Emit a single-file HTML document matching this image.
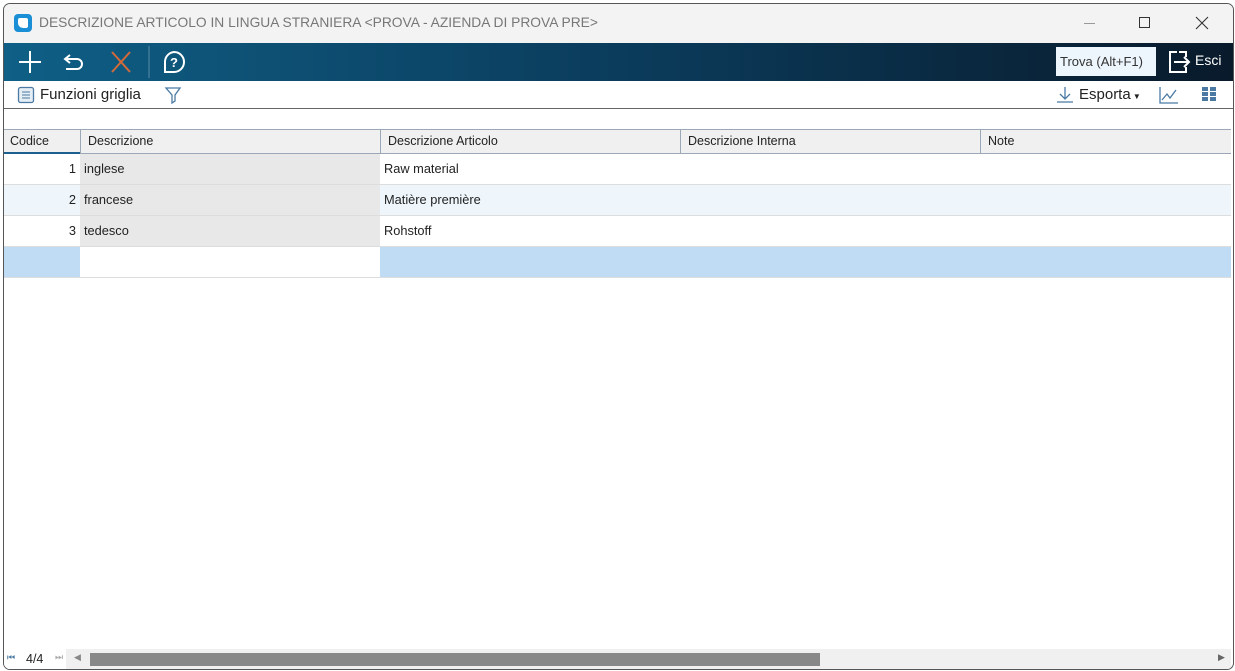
<!DOCTYPE html><html><head><style>
*{margin:0;padding:0;box-sizing:border-box}
body{width:1235px;height:671px;background:#fff;font-family:"Liberation Sans",sans-serif;overflow:hidden;position:relative}
.win{position:absolute;left:3px;top:3px;width:1231px;height:667px;border:1px solid #555;border-radius:7px;overflow:hidden;background:#fff}
.title{position:absolute;left:0;top:0;width:100%;height:39px;background:#f3f3f3;font-size:13.8px;color:#777;line-height:38px;padding-left:35px}
.tb{position:absolute;left:0;top:39px;width:100%;height:38px;background:linear-gradient(90deg,#0f5f86 0%,#0b3c5c 50%,#091a2b 100%)}
.abs{position:absolute}
.row2{position:absolute;top:77px;left:0;width:100%;height:28px;border-bottom:1px solid #666;font-size:15px;color:#222}
.hdr{position:absolute;top:125px;left:0;width:1227px;height:25px;background:#f0f0f0;border-top:1px solid #9aa8b8;border-bottom:1px solid #9aa8b8;font-size:12.5px;color:#222}
.hdr div{position:absolute;top:0;height:24px;line-height:23px;padding-left:7px;border-left:1px solid #9aa8b8}
.r{position:absolute;left:0;width:1227px;height:31px;border-bottom:1px solid #ddd;font-size:12.8px;color:#222;line-height:30px}
.r div{position:absolute;top:0;height:30px}
</style></head><body><div class="win">
<div class="title">DESCRIZIONE ARTICOLO IN LINGUA STRANIERA &lt;PROVA - AZIENDA DI PROVA PRE&gt;</div>
<div class="abs" style="left:10px;top:10px;width:18px;height:18px;background:#1a8fd6;border-radius:4px"><div style="position:absolute;left:4px;top:4px;width:10px;height:10px;background:#fff;border-radius:2px 2px 2px 5px"></div></div>
<div class="abs" style="left:1080px;top:19px;width:11px;height:1px;background:#999"></div>
<div class="abs" style="left:1135px;top:13px;width:11px;height:11px;border:1px solid #333"></div>
<svg class="abs" style="left:1191px;top:12px" width="14" height="14"><path d="M1 1l12 12M13 1L1 13" stroke="#333" stroke-width="1.1"/></svg>
<div class="tb">
<svg class="abs" style="left:0;top:0" width="200" height="38"><g stroke="#fff" stroke-width="2" fill="none"><path d="M26 8v22M15 19h22"/><path d="M66 12l-5 4 5 4M61 16h12a5 5 0 0 1 0 10H62"/><path d="M170 9a10 10 0 1 1 0 20h-9v-10a10 10 0 0 1 9-10z"/></g><path d="M108 9l18 20M126 9l-18 20" stroke="#d06a3a" stroke-width="2"/><line x1="145" y1="3" x2="145" y2="35" stroke="#5a8aa8"/><text x="166" y="24" fill="#fff" font-size="13" font-weight="bold" font-family="Liberation Sans">?</text></svg>
<div class="abs" style="left:1052px;top:4px;width:100px;height:29px;background:#eef6fd;font-size:13px;color:#333;line-height:29px;padding-left:4px">Trova (Alt+F1)</div>
<svg class="abs" style="left:1163px;top:7px" width="26" height="24"><g stroke="#fff" stroke-width="2" fill="none"><path d="M10 2H3v20h16v-5M19 7V2h-7"/><path d="M7 12h15M17 7l5 5-5 5"/></g></svg>
<div class="abs" style="left:1191px;top:9px;font-size:14px;color:#fff">Esci</div>
</div>
<div class="row2">
<svg class="abs" style="left:13px;top:5px" width="18" height="18"><rect x="1.5" y="1.5" width="15" height="15" rx="2" fill="#e6eef5" stroke="#4a7aa3" stroke-width="1.3"/><path d="M5 6h8M5 9h8M5 12h8" stroke="#4a7aa3"/></svg>
<div class="abs" style="left:36px;top:5px">Funzioni griglia</div>
<svg class="abs" style="left:160px;top:5px" width="18" height="18"><path d="M2 2h14l-5 7v6l-3 2V9z" fill="none" stroke="#4a7aa3" stroke-width="1.3"/></svg>
<svg class="abs" style="left:1052px;top:5px" width="18" height="18"><path d="M9 1v12M4 8l5 5 5-5M1 16h16" fill="none" stroke="#4a7aa3" stroke-width="1.3"/></svg>
<div class="abs" style="left:1075px;top:5px">Esporta<span style="font-size:8px"> ▼</span></div>
<svg class="abs" style="left:1155px;top:5px" width="20" height="18"><path d="M1 1v16h18M3 14l5-6 3 4 6-8" fill="none" stroke="#4a7aa3" stroke-width="1.3"/></svg>
<svg class="abs" style="left:1197px;top:5px" width="16" height="16" fill="#4a7aa3"><rect x="1" y="1" width="6" height="4"/><rect x="9" y="1" width="6" height="4"/><rect x="1" y="6" width="6" height="4"/><rect x="9" y="6" width="6" height="4"/><rect x="1" y="11" width="6" height="4"/><rect x="9" y="11" width="6" height="4"/></svg>
</div>
<div class="hdr">
<div style="left:0;width:76px;border-left:none;padding-left:6px;border-bottom:2px solid #1d5f8f">Codice</div>
<div style="left:76px;width:300px">Descrizione</div>
<div style="left:376px;width:300px">Descrizione Articolo</div>
<div style="left:676px;width:300px">Descrizione Interna</div>
<div style="left:976px;width:251px">Note</div>
</div>
<div class="r" style="top:150px"><div style="left:0;width:76px;text-align:right;padding-right:4px">1</div><div style="left:76px;width:300px;background:#e8e8e8;padding-left:4px">inglese</div><div style="left:380px">Raw material</div></div>
<div class="r" style="top:181px;background:#eef6fc"><div style="left:0;width:76px;text-align:right;padding-right:4px">2</div><div style="left:76px;width:300px;background:#e8e8e8;padding-left:4px">francese</div><div style="left:380px">Matière première</div></div>
<div class="r" style="top:212px"><div style="left:0;width:76px;text-align:right;padding-right:4px">3</div><div style="left:76px;width:300px;background:#e8e8e8;padding-left:4px">tedesco</div><div style="left:380px">Rohstoff</div></div>
<div class="r" style="top:243px;background:#c0dcf5"><div style="left:76px;width:300px;background:#fff"></div></div>
<div class="abs" style="left:0;top:645px;width:1227px;height:20px;background:#f0f0f0"></div>
<div class="abs" style="left:0;top:645px;width:62px;height:20px;background:#fff"></div>
<div class="abs" style="left:3px;top:648px;font-size:9px;color:#4a7aa3">⏮</div>
<div class="abs" style="left:22px;top:648px;font-size:12.5px;color:#222">4/4</div>
<div class="abs" style="left:51px;top:648px;font-size:9px;color:#aaa">⏭</div>
<div class="abs" style="left:70px;top:648px;font-size:9px;color:#888">◀</div>
<div class="abs" style="left:86px;top:649px;width:730px;height:13px;background:#888"></div>
<div class="abs" style="left:1214px;top:648px;font-size:9px;color:#666">▶</div>
</div></body></html>
